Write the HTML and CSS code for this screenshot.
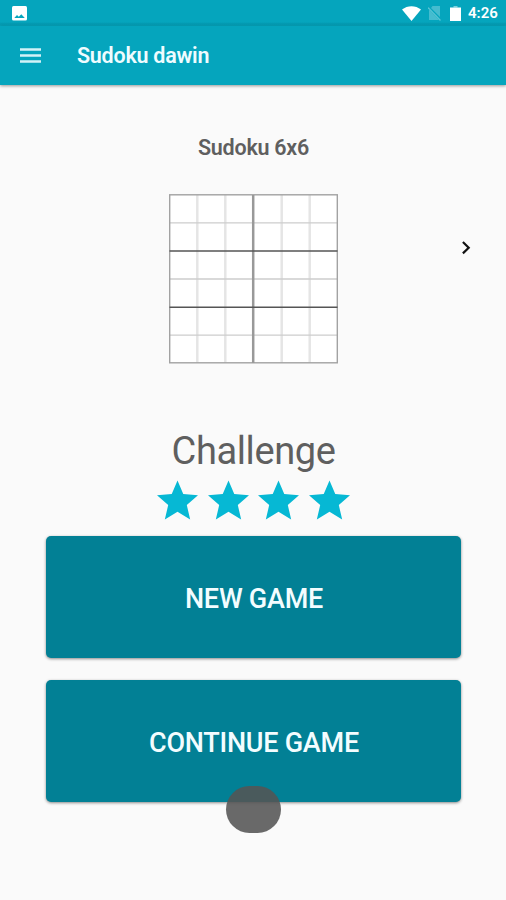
FILE: index.html
```html
<!DOCTYPE html>
<html lang="en">
<head>
    <meta charset="UTF-8">
    <meta name="viewport" content="width=device-width, initial-scale=1.0">
    <title>Sudoku dawin</title>
    <link rel="stylesheet" href="styles.css">
</head>
<body>

<div class="status-bar">
    <svg class="icon-picture" width="15" height="15" viewBox="0 0 15 15">
        <rect width="15" height="14.500" rx="1.500" fill="#fff"/>
        <path d="M2.300 12 5 9l1.800 1.800 2.500-2.600 3.500 3.800z" fill="#05a5bd"/>
    </svg>
    <div class="status-icons">
        <svg width="19" height="15" viewBox="0 0 19 15">
            <path d="M0 3.600C5.500-1 13.500-1 19 3.600L9.500 15z" fill="#fff"/>
        </svg>
        <svg class="icon-signal" width="13" height="15" viewBox="0 0 13 15">
            <path d="M4.500 0H12v11L3 2zM1 3.500 11 14H1z" fill="#45bccf"/>
            <path d="M0 1.500 12.500 14.500" stroke="#55c3d3" stroke-width="1.300"/>
        </svg>
        <svg class="icon-battery" width="11" height="16" viewBox="0 0 11 16">
            <path d="M3.500 0h4v1.500H3.500z" fill="#7fd0dd"/>
            <path d="M0 1.500h11V15H0z" fill="#fff"/>
        </svg>
        <span class="clock">4:26</span>
    </div>
</div>

<div class="navbar">
    <svg class="menu" width="21" height="15" viewBox="0 0 21 15">
        <path d="M0 1.500h21M0 7.500h21M0 13.500h21" stroke="#d3f2f7" stroke-width="2.600"/>
    </svg>
    <span class="title">Sudoku dawin</span>
</div>

<div class="game-type">
    <h2>Sudoku 6x6</h2>
    <div class="board-row">
        <svg class="board" width="170" height="170" viewBox="-0.500 0 170 170">
            <rect x="1" y="1" width="168" height="168" fill="#fff"/>
            <path d="M28.800 1v168M56.800 1v168M113.200 1v168M141.200 1v168" stroke="#e5e5e5" stroke-width="2.500"/>
            <path d="M1 28.800h168M1 85h168M1 141.200h168" stroke="#cdcdcd" stroke-width="1.300"/>
            <rect x="1.200" y="0.800" width="167.600" height="168" fill="none" stroke="#a2a2a2" stroke-width="1.400"/>
            <path d="M84.700 1v168" stroke="#999" stroke-width="2.500"/>
            <path d="M1 57h168M1 113.200h168" stroke="#555" stroke-width="1.600"/>
        </svg>
        <svg class="next" width="10" height="14" viewBox="0 0 10 14">
            <path d="M1.900 1 7.700 6.700 1.900 12.400" fill="none" stroke="#111" stroke-width="2.200"/>
        </svg>
    </div>
</div>

<div class="difficulty">
    <div class="difficulty-name">Challenge</div>
    <div class="stars">
        <svg viewBox="0 0 20 19"><path d="M10 15.270 16.180 19l-1.640-7.030L20 7.240l-7.190-.61L10 0 7.190 6.630 0 7.240l5.460 4.730L3.820 19z"/></svg>
        <svg viewBox="0 0 20 19"><path d="M10 15.270 16.180 19l-1.640-7.030L20 7.240l-7.190-.61L10 0 7.190 6.630 0 7.240l5.460 4.730L3.820 19z"/></svg>
        <svg viewBox="0 0 20 19"><path d="M10 15.270 16.180 19l-1.640-7.030L20 7.240l-7.190-.61L10 0 7.190 6.630 0 7.240l5.460 4.730L3.820 19z"/></svg>
        <svg viewBox="0 0 20 19"><path d="M10 15.270 16.180 19l-1.640-7.030L20 7.240l-7.190-.61L10 0 7.190 6.630 0 7.240l5.460 4.730L3.820 19z"/></svg>
    </div>
</div>

<div class="buttons">
    <button>NEW GAME</button>
    <button>CONTINUE GAME</button>
    <!-- Touch indicator -->
    <div class="touch"></div>
</div>

</body>
</html>
```

FILE: styles.css
```css
body {
    font-family: Roboto, sans-serif;
    margin: 0;
    padding: 0;
    height: 900px;
    overflow: hidden;
    background-color: #fafafa;
    color: #5f5f5f;
}
svg {
    display: block;
    flex: none;
}
.status-bar {
    box-sizing: border-box;
    height: 26px;
    display: flex;
    justify-content: space-between;
    padding: 6px 8px 0 12px;
    background: linear-gradient(#05a5bd 22px, #0498af 24px, #05a5bd 26px);
}
.status-icons {
    display: flex;
    height: 15px;
    align-items: center;
}
.icon-signal {
    margin-left: 7px;
}
.icon-battery {
    margin-left: 9px;
}
.clock {
    width: 30px;
    margin-left: 7px;
    font-size: 15px;
    font-weight: 600;
    line-height: 17px;
    color: white;
}
.navbar {
    box-sizing: border-box;
    height: 59px;
    display: flex;
    align-items: center;
    padding: 0 0 0 20px;
    background-color: #05a5bd;
    box-shadow: 0 1px 3px rgba(0, 0, 0, 0.4);
}
.title {
    margin-left: 36px;
    font-size: 21.5px;
    font-weight: 600;
    letter-spacing: -0.25px;
    color: #effcff;
}
h2 {
    margin: 0;
    padding: 50px 0 0 1px;
    text-align: center;
    font-size: 21.5px;
    font-weight: 600;
    letter-spacing: -0.25px;
    line-height: 26px;
}
.board-row {
    display: grid;
    grid-template-columns: 1fr 170px 1fr;
    margin-top: 33px;
}
.board {
    grid-column: 2;
}
.next {
    margin: 47px 0 0 123px;
}
.difficulty {
    margin-top: 64px;
    padding-left: 1px;
}
.difficulty-name {
    text-align: center;
    font-size: 38px;
    letter-spacing: -0.4px;
    line-height: 46px;
}
.stars {
    display: flex;
    justify-content: center;
    gap: 9.7px;
    margin-top: 6px;
}
.stars svg {
    width: 41px;
    height: 40px;
    fill: #06b8d4;
}
.buttons {
    position: relative;
    display: flex;
    flex-direction: column;
    gap: 22px;
    margin: 16px 45px 0 46px;
}
button {
    height: 122px;
    padding: 3px 0 0 1px;
    border: none;
    border-radius: 5px;
    background-color: #028095;
    box-shadow: 0 1px 3px rgba(0, 0, 0, 0.45);
    color: #f3fdff;
    font-family: inherit;
    font-size: 27px;
    font-weight: 500;
    letter-spacing: -0.25px;
}
.touch {
    position: absolute;
    left: 180px;
    top: 250px;
    width: 55px;
    height: 47px;
    border-radius: 24px;
    background-color: rgba(84, 84, 84, 0.88);
}
```
